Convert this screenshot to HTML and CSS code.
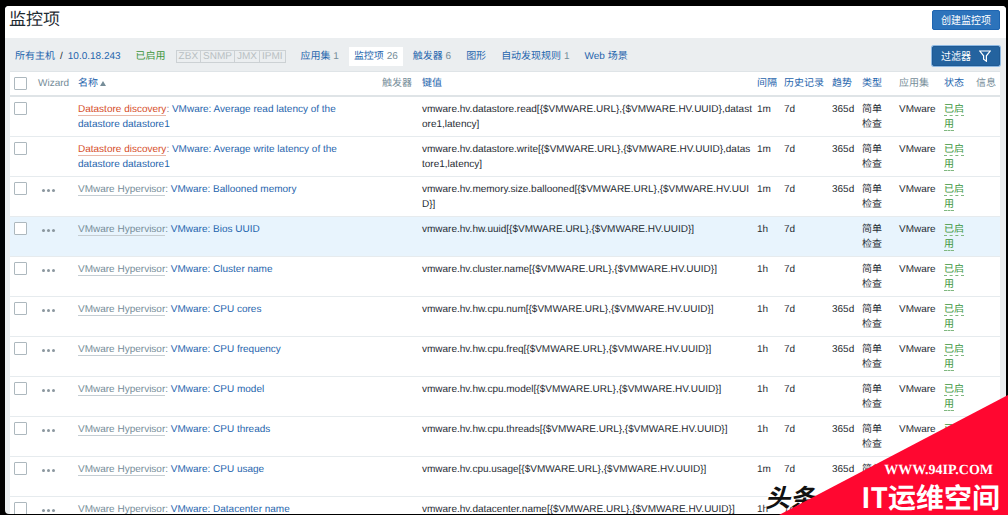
FILE: index.html
```html
<!DOCTYPE html>
<html lang="zh-CN">
<head>
<meta charset="utf-8">
<title>监控项</title>
<link rel="stylesheet" href="styles.css">
</head>
<body>
<div class="window">
  <header class="page-header">
    <h1 class="page-title">监控项</h1>
    <button class="btn btn-create" type="button">创建监控项</button>
  </header>
  <main class="content">
    <div class="toolbar">
      <nav class="nav">
        <span class="crumbs"><a href="#">所有主机</a><span>/</span><a href="#">10.0.18.243</a></span>
        <span class="enabled">已启用</span>
        <span class="interfaces"><span>ZBX</span><span>SNMP</span><span>JMX</span><span>IPMI</span></span>
        <a class="tab" href="#">应用集 <small>1</small></a>
        <a class="tab tab-active" href="#">监控项 <small>26</small></a>
        <a class="tab" href="#">触发器 <small>6</small></a>
        <a class="tab" href="#">图形</a>
        <a class="tab" href="#">自动发现规则 <small>1</small></a>
        <a class="tab" href="#">Web 场景</a>
      </nav>
      <button class="btn btn-filter" type="button">过滤器
        <svg class="funnel" viewBox="0 0 12 12" aria-hidden="true"><path d="M.8 1h10.400L7.400 5.800v5.400L4.600 9.200V5.800z"/></svg>
      </button>
    </div>
    <table class="items">
      <colgroup>
        <col class="c-check"><col class="c-wizard"><col class="c-name"><col class="c-trig"><col class="c-key"><col class="c-int"><col class="c-hist"><col class="c-trend"><col class="c-type"><col class="c-app"><col class="c-status"><col class="c-info">
      </colgroup>
      <thead>
        <tr>
          <th><input type="checkbox" aria-label="全选"></th>
          <th>Wizard</th>
          <th><a href="#">名称<span class="sort"></span></a></th>
          <th>触发器</th>
          <th><a href="#">键值</a></th>
          <th><a href="#">间隔</a></th>
          <th><a href="#">历史记录</a></th>
          <th><a href="#">趋势</a></th>
          <th><a href="#">类型</a></th>
          <th>应用集</th>
          <th><a href="#">状态</a></th>
          <th>信息</th>
        </tr>
      </thead>
      <tbody id="rows"></tbody>
    </table>
  </main>
</div>
<div class="stamp">头条</div>
<div class="corner">
  <div class="corner-url">WWW.94IP.COM</div>
  <div class="corner-name">IT运维空间</div>
</div>
<script src="items.js"></script>
</body>
</html>
```
FILE: styles.css
```css
* {
  box-sizing: border-box;
}

body {
  margin: 0;
  height: 100vh;
  padding: 6px 2px 1px 5px;
  overflow: hidden;
  position: relative;
  background: #000;
  color: #1f2c33;
  font: 10px/15px "Liberation Sans", "Noto Sans CJK SC", sans-serif;
  text-rendering: geometricPrecision;
}

a {
  color: #1f65ad;
  text-decoration: none;
}

.window {
  height: 100%;
  overflow: hidden;
  border-radius: 4px;
  background: #ebeef0;
}

.page-header {
  display: flex;
  align-items: center;
  justify-content: space-between;
  height: 32px;
  padding: 0 6px 4px 4px;
  background: #fff;
}

.page-title {
  margin: 0;
  font-size: 17px;
  line-height: 24px;
  font-weight: 400;
}

.btn {
  display: flex;
  align-items: center;
  height: 20px;
  border: 1px solid #1f65b0;
  border-radius: 2px;
  padding: 0 8px;
  background: #2c73bb;
  color: #fff;
  font: inherit;
}

.btn-filter {
  gap: 8px;
  background: #24639f;
  border-color: #1f5a94;
  box-shadow: 0 0 0 1px #8db8e2;
}

.funnel {
  width: 12px;
  height: 12px;
  fill: none;
  stroke: #fff;
  stroke-width: 1.2;
}

.content {
  padding: 0 6px 0 5px;
}

.toolbar {
  display: flex;
  align-items: center;
  justify-content: space-between;
  height: 33px;
  padding-top: 3px;
}

.nav {
  display: flex;
  align-items: center;
  gap: 5px;
}

.crumbs {
  display: flex;
  gap: 5px;
  padding: 0 5px;
}

.enabled {
  padding: 0 5px;
  color: #3c963c;
}

.interfaces {
  display: flex;
  margin-right: 5px;
  border: 1px solid #ccd1d4;
  color: #b8bec2;
  line-height: 11px;
}

.interfaces span {
  padding: 0 2px;
}

.interfaces span + span {
  border-left: 1px solid #ccd1d4;
}

.tab {
  padding: 2px 5px;
}

.tab small {
  color: #768d99;
  font-size: 10px;
}

.tab-active {
  background: #fff;
}

.items {
  width: 100%;
  table-layout: fixed;
  border-collapse: separate;
  border-spacing: 0;
  background: #fff;
  border: solid #dfe4e7;
  border-width: 1px 0 0;
}

.c-check { width: 23px; }
.c-wizard { width: 40px; }
.c-trig { width: 40px; }
.c-key { width: 335px; }
.c-int { width: 27px; }
.c-hist { width: 48px; }
.c-trend { width: 30px; }
.c-type { width: 37px; }
.c-app { width: 45px; }
.c-status { width: 32px; }
.c-info { width: 29px; }

th {
  height: 25px;
  padding: 0 0 0 5px;
  border-bottom: 2px solid #dfe4e7;
  color: #768d99;
  font-weight: 400;
  text-align: left;
  white-space: nowrap;
}

td {
  height: 40px;
  padding: 5px 5px 4px;
  border-bottom: 1px solid #e6ebee;
  vertical-align: top;
}

th:first-child,
td:first-child {
  padding-left: 4px;
  padding-right: 0;
}

.key,
.trend,
.app {
  padding-right: 0;
}

.key {
  word-break: break-all;
}

.highlight td {
  background: #e8f4fd;
}

input[type="checkbox"] {
  appearance: none;
  display: block;
  width: 13px;
  height: 13px;
  margin: 0;
  border: 1px solid #adb8be;
  border-radius: 1px;
  background: #fff;
}

.sort {
  display: inline-block;
  margin-left: 2px;
  border: solid transparent;
  border-width: 0 3px 5px;
  border-bottom-color: #768d99;
}

.source {
  border-bottom: 1px solid #c5cdd2;
  color: #768d99;
}

.source-rule {
  border-bottom-color: #e9b9a9;
  color: #d64e2a;
}

.colon {
  color: #768d99;
}

.status {
  border-bottom: 1px dashed #7fb87f;
  color: #3c963c;
}

.more {
  display: flex;
  align-items: center;
  gap: 2px;
  height: 16px;
  margin-left: 4px;
  border: 0;
  padding: 0;
  background: none;
}

.more i {
  width: 3px;
  height: 3px;
  border-radius: 50%;
  background: #8b979f;
}

.stamp {
  position: absolute;
  right: 193px;
  bottom: 2px;
  color: #111;
  font-size: 25px;
  line-height: 28px;
  font-style: italic;
  font-weight: 700;
  text-shadow: 1px 1px #fff, -1px -1px #fff;
}

.corner {
  position: absolute;
  right: 0;
  bottom: 0;
  width: 229px;
  height: 120px;
  display: flex;
  flex-direction: column;
  align-items: flex-end;
  justify-content: flex-end;
  background: #ff0730;
  clip-path: polygon(100% 0, 100% 100%, 0 100%);
  color: #fff;
  font-weight: 700;
}

.corner-url {
  padding-right: 15px;
  font: 700 14px/16px "Liberation Serif", serif;
}

.corner-name {
  padding-right: 8px;
  font-family: "Noto Sans CJK SC", sans-serif;
  font-size: 28px;
  line-height: 36px;
}
```
FILE: items.js
```js
const items = [
  ["d", "Average read latency of the datastore datastore1", "datastore.read", ",datastore1,latency", "1m", "365d"],
  ["d", "Average write latency of the datastore datastore1", "datastore.write", ",datastore1,latency", "1m", "365d"],
  ["h", "Ballooned memory", "memory.size.ballooned", "", "1m", "365d"],
  ["h", "Bios UUID", "hw.uuid", "", "1h", ""],
  ["h", "Cluster name", "cluster.name", "", "1h", ""],
  ["h", "CPU cores", "hw.cpu.num", "", "1h", "365d"],
  ["h", "CPU frequency", "hw.cpu.freq", "", "1h", "365d"],
  ["h", "CPU model", "hw.cpu.model", "", "1h", ""],
  ["h", "CPU threads", "hw.cpu.threads", "", "1h", "365d"],
  ["h", "CPU usage", "cpu.usage", "", "1m", "365d"],
  ["h", "Datacenter name", "datacenter.name", "", "1h", ""]
];

document.getElementById("rows").innerHTML = items.map(([kind, name, key, extra, interval, trend]) => {
  const rule = kind === "d";
  const more = rule ? "" : '<button class="more" type="button" aria-label="Wizard"><i></i><i></i><i></i></button>';
  const source = rule ? '<a class="source source-rule" href="#">Datastore discovery</a>' : '<a class="source" href="#">VMware Hypervisor</a>';
  return `<tr class="${name === "Bios UUID" ? "highlight" : ""}">
    <td><input type="checkbox" aria-label="${name}"></td>
    <td>${more}</td>
    <td>${source}<span class="colon">:</span> <a href="#">VMware: ${name}</a></td>
    <td></td>
    <td class="key">vmware.hv.${key}[{$VMWARE.URL},{$VMWARE.HV.UUID}${extra}]</td>
    <td>${interval}</td>
    <td>7d</td>
    <td class="trend">${trend}</td>
    <td>简单检查</td>
    <td class="app">VMware</td>
    <td><a class="status" href="#">已启用</a></td>
    <td></td>
  </tr>`;
}).join("");
```
